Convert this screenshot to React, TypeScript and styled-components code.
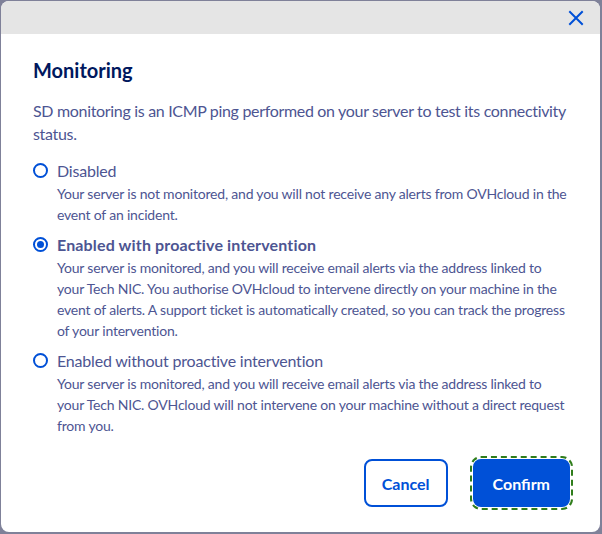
import React, { useState } from "react";
import styled, { createGlobalStyle } from "styled-components";

const Global = createGlobalStyle`
  html, body { margin: 0; padding: 0; }
  body {
    background: #7f8199;
    font-family: Lato, "Open Sans", sans-serif;
    width: 602px;
    height: 534px;
    overflow: hidden;
  }
`;

const Modal = styled.div`
  margin: 1px 0 0 1px;
  width: 599px;
  height: 531px;
  background: #ffffff;
  border-radius: 8px;
  overflow: hidden;
  display: flex;
  flex-direction: column;
  box-sizing: border-box;
`;

const Header = styled.div`
  height: 33px;
  background: #e5e5e5;
  display: flex;
  align-items: center;
  justify-content: flex-end;
  padding-right: 14px;
  flex-shrink: 0;
`;

const CloseButton = styled.button`
  border: none;
  background: transparent;
  padding: 0;
  width: 20px;
  height: 20px;
  display: flex;
  align-items: center;
  justify-content: center;
  cursor: pointer;
`;

const Body = styled.div`
  padding: 22px 28px 0 32px;
  display: flex;
  flex-direction: column;
  flex: 1;
`;

const Title = styled.h2`
  margin: 0;
  font-size: 20px;
  line-height: 28px;
  font-weight: 700;
  color: #00185e;
`;

const Intro = styled.p`
  margin: 15px 0 0 0;
  font-size: 16px;
  line-height: 23px;
  letter-spacing: -0.32px;
  color: #4d5592;
  white-space: nowrap;
`;

const Options = styled.div`
  display: flex;
  flex-direction: column;
  gap: 8px;
  margin-top: 14px;
`;

const Option = styled.label`
  display: grid;
  grid-template-columns: 24px 1fr;
  column-gap: 0;
  cursor: pointer;
`;

const RadioDot = styled.span<{ $checked: boolean }>`
  width: 15px;
  height: 15px;
  box-sizing: border-box;
  border-radius: 50%;
  border: 2px solid #0050d7;
  margin-top: 4px;
  display: flex;
  align-items: center;
  justify-content: center;
  &::after {
    content: "";
    width: 7px;
    height: 7px;
    border-radius: 50%;
    background: #0050d7;
    display: ${(p) => (p.$checked ? "block" : "none")};
  }
`;

const OptionText = styled.div`
  display: flex;
  flex-direction: column;
`;

const OptionLabel = styled.span<{ $checked: boolean }>`
  font-size: 16px;
  line-height: 24px;
  font-weight: ${(p) => (p.$checked ? 700 : 400)};
  letter-spacing: ${(p) => (p.$checked ? "0.15px" : "-0.2px")};
  color: #4d5592;
`;

const OptionDesc = styled.span`
  font-size: 14px;
  line-height: 21px;
  letter-spacing: -0.2px;
  color: #4d5592;
  white-space: nowrap;
`;

const Footer = styled.div`
  margin-top: auto;
  display: flex;
  justify-content: flex-end;
  gap: 25px;
  padding: 0 30px 25px 0;
`;

const Button = styled.button<{ $primary?: boolean; $focused?: boolean }>`
  height: 48px;
  padding: 0 ${(p) => (p.$primary ? "18px" : "16px")};
  border-radius: 8px;
  font-family: inherit;
  font-size: 16px;
  font-weight: 700;
  cursor: pointer;
  box-sizing: border-box;
  border: 2px solid #0050d7;
  background: ${(p) => (p.$primary ? "#0050d7" : "#ffffff")};
  color: ${(p) => (p.$primary ? "#ffffff" : "#0050d7")};
  outline: ${(p) => (p.$focused ? "2px dashed #2f7d1b" : "none")};
  outline-offset: 1px;
`;

const intro = [
  "SD monitoring is an ICMP ping performed on your server to test its connectivity",
  "status.",
];

const options = [
  {
    label: "Disabled",
    desc: [
      "Your server is not monitored, and you will not receive any alerts from OVHcloud in the",
      "event of an incident.",
    ],
  },
  {
    label: "Enabled with proactive intervention",
    desc: [
      "Your server is monitored, and you will receive email alerts via the address linked to",
      "your Tech NIC. You authorise OVHcloud to intervene directly on your machine in the",
      "event of alerts. A support ticket is automatically created, so you can track the progress",
      "of your intervention.",
    ],
  },
  {
    label: "Enabled without proactive intervention",
    desc: [
      "Your server is monitored, and you will receive email alerts via the address linked to",
      "your Tech NIC. OVHcloud will not intervene on your machine without a direct request",
      "from you.",
    ],
  },
];

const withBreaks = (lines: string[]) =>
  lines.map((l, i) => (
    <React.Fragment key={i}>
      {i > 0 && <br />}
      {l}
    </React.Fragment>
  ));

export default function App() {
  const [selected, setSelected] = useState(1);
  return (
    <>
      <Global />
      <Modal>
        <Header>
          <CloseButton aria-label="Close">
            <svg width="16" height="16" viewBox="0 0 16 16">
              <path d="M2 2 L14 14 M14 2 L2 14" stroke="#0050d7" strokeWidth="2" strokeLinecap="square" />
            </svg>
          </CloseButton>
        </Header>
        <Body>
          <Title>Monitoring</Title>
          <Intro>{withBreaks(intro)}</Intro>
          <Options>
            {options.map((o, i) => (
              <Option key={o.label} onClick={() => setSelected(i)}>
                <RadioDot $checked={selected === i} />
                <OptionText>
                  <OptionLabel $checked={selected === i}>{o.label}</OptionLabel>
                  <OptionDesc>{withBreaks(o.desc)}</OptionDesc>
                </OptionText>
              </Option>
            ))}
          </Options>
        </Body>
        <Footer>
          <Button>Cancel</Button>
          <Button $primary $focused>Confirm</Button>
        </Footer>
      </Modal>
    </>
  );
}
